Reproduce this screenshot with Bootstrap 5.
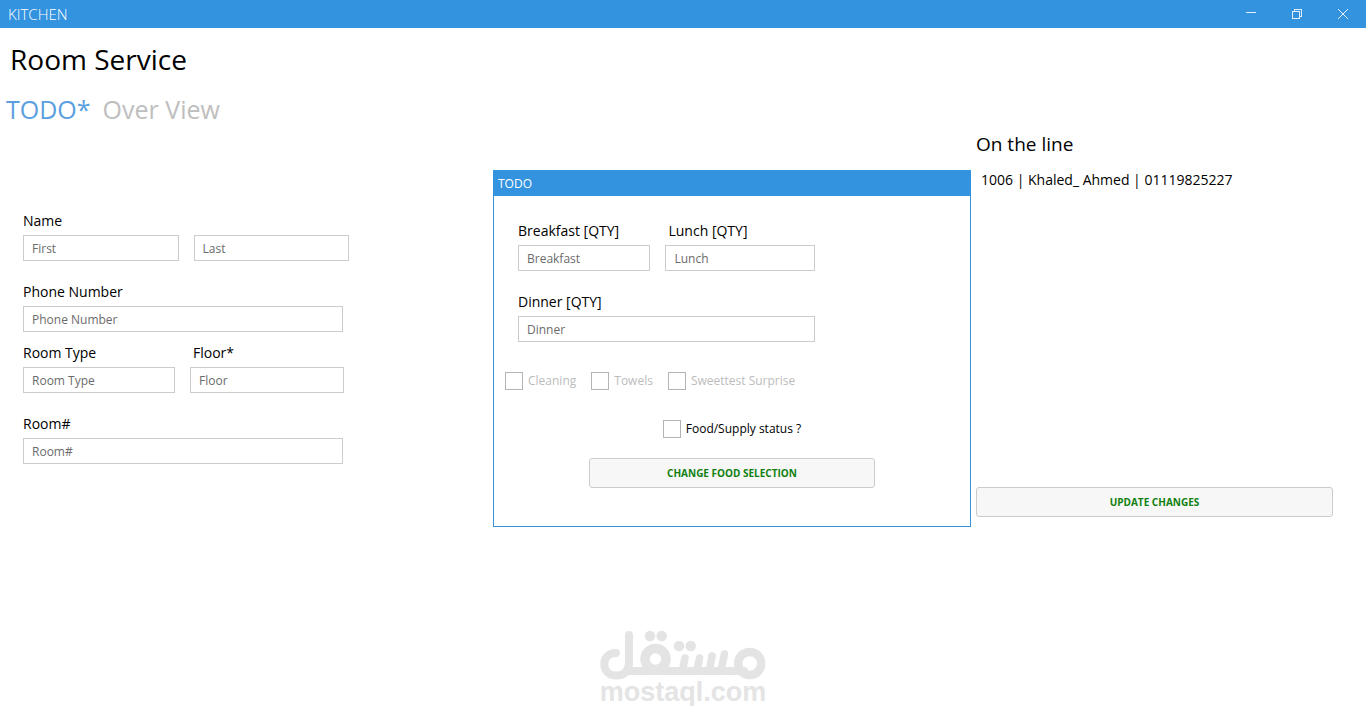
<!DOCTYPE html>
<html lang="en">
<head>
<meta charset="utf-8">
<meta name="viewport" content="width=device-width, initial-scale=1">
<title>Kitchen</title>
<link rel="stylesheet" href="https://cdn.jsdelivr.net/npm/bootstrap@5.3.0/dist/css/bootstrap.min.css">
<style>
  :root { --accent: #3393df; --line: #ccc; }
  body { font-family: "Open Sans", "Noto Sans", sans-serif; font-size: 14px; line-height: 20px; color: #000; background: #fff; }
  .titlebar { background: var(--accent); color: #fff; height: 28px; padding-left: 8px; }
  .titlebar-name { font-weight: 300; font-size: 15px; }
  .winbtn { width: 46px; height: 28px; color: #fff; border-radius: 0; }
  .winbtn svg { display: block; margin: auto; }
  .page-title { font-size: 28px; line-height: 40px; padding: 11px 10px 0; font-weight: 400; }
  .tabs { gap: 12px; padding: 10px 6px 0; }
  .tabs .nav-link { font-size: 25px; line-height: 40px; color: #bebebe; }
  .tabs .nav-link.active { color: #5b9fe0; }
  .panes { display: grid; grid-template-columns: 493fr 478fr 395fr; align-items: start; }
  .guest { padding: 82px 20px 0 23px; }
  .field-label { display: block; margin: 0 0 4px; line-height: 20px; }
  .textbox { height: 26px; padding: 0 8px; font-size: 12px; border: 1px solid var(--line); border-radius: 0; color: #000; }
  .textbox::placeholder { color: #6b6b6b; opacity: 1; }
  .name-row { max-width: 326px; gap: 15px; }
  .wide { max-width: 320px; }
  .pair { display: grid; gap: 15px; }
  .room-row { grid-template-columns: 152fr 154fr; max-width: 321px; margin: 11px 0 21px; }
  .name-block { margin-bottom: 21px; }
  .meal-row { grid-template-columns: 132fr 149fr; margin-bottom: 21px; }
  .indent { padding-left: 3px; }
  .todo { border: 1px solid var(--accent); border-radius: 0; margin-top: 41px; min-height: 357px; }
  .todo-head { background: var(--accent); color: #fff; font-size: 12px; line-height: 25px; padding: 0 4px; }
  .meals { max-width: 321px; padding: 25px 0 0 24px; }
  .tick { gap: 5px; font-size: 12px; line-height: 20px; margin: 0; align-items: center; }
  .tick .form-check-input { width: 18px; height: 18px; margin: 0; border: 1px solid #b4b4b4; border-radius: 0; opacity: 1; flex: none; }
  .tick.off { color: #bcbcbc; }
  .tick-row { gap: 15px; padding: 29px 11px 0; }
  .status-row { margin: 28px 0 19px; }
  .action { height: 30px; padding: 0; font-size: 10px; font-weight: 700; color: #108010; background: #f7f7f7; border: 1px solid var(--line); border-radius: 3px; }
  .change { width: 60%; }
  .queue { padding: 3px 33px 0 5px; min-height: 388px; }
  .queue-title { font-size: 19px; line-height: 24px; font-weight: 400; margin: 0 0 14px; }
  .queue-item { padding-left: 5px; line-height: 20px; }
  .brand { color: #e4e4e4; margin-top: 99px; }
  .brand-name { font: 700 27px/28px "Liberation Sans", Arial, sans-serif; }
</style>
</head>
<body>
<header class="titlebar d-flex align-items-center">
  <span class="titlebar-name">KITCHEN</span>
  <div class="d-flex ms-auto">
    <button type="button" class="btn winbtn p-0" aria-label="Minimize"><svg width="10" height="10" fill="none" stroke="#e3f0fb" shape-rendering="crispEdges"><path d="M0 3.500H10"/></svg></button>
    <button type="button" class="btn winbtn p-0" aria-label="Restore"><svg width="10" height="10" fill="none" stroke="#e3f0fb" shape-rendering="crispEdges"><path d="M.5 2.500h7v7h-7zM2.500 2.500v-2h7v7h-2"/></svg></button>
    <button type="button" class="btn winbtn p-0" aria-label="Close"><svg width="10" height="10" fill="none" stroke="#e3f0fb"><path d="M0 0l10 10M10 0L0 10"/></svg></button>
  </div>
</header>
<main>
  <h1 class="page-title m-0">Room Service</h1>
  <nav class="tabs nav">
    <a class="nav-link p-0 active" href="#todo">TODO*</a>
    <a class="nav-link p-0" href="#overview">Over View</a>
  </nav>
  <div class="panes">
    <form class="guest">
      <div class="name-block">
        <label class="field-label" for="first">Name</label>
        <div class="name-row d-flex">
          <input class="form-control textbox" id="first" type="text" placeholder="First">
          <input class="form-control textbox" id="last" type="text" placeholder="Last" aria-label="Last name">
        </div>
      </div>
      <div class="wide">
        <label class="field-label" for="phone">Phone Number</label>
        <input class="form-control textbox" id="phone" type="tel" placeholder="Phone Number">
      </div>
      <div class="pair room-row">
        <div>
          <label class="field-label" for="rtype">Room Type</label>
          <input class="form-control textbox" id="rtype" type="text" placeholder="Room Type">
        </div>
        <div>
          <label class="field-label indent" for="floor">Floor*</label>
          <input class="form-control textbox" id="floor" type="text" placeholder="Floor">
        </div>
      </div>
      <div class="wide">
        <label class="field-label" for="room">Room#</label>
        <input class="form-control textbox" id="room" type="text" placeholder="Room#">
      </div>
    </form>

    <section class="todo" id="todo">
      <div class="todo-head">TODO</div>
      <div class="meals">
        <div class="pair meal-row">
          <div>
            <label class="field-label" for="breakfast">Breakfast [QTY]</label>
            <input class="form-control textbox" id="breakfast" type="text" placeholder="Breakfast">
          </div>
          <div>
            <label class="field-label indent" for="lunch">Lunch [QTY]</label>
            <input class="form-control textbox" id="lunch" type="text" placeholder="Lunch">
          </div>
        </div>
        <label class="field-label" for="dinner">Dinner [QTY]</label>
        <input class="form-control textbox" id="dinner" type="text" placeholder="Dinner">
      </div>
      <div class="tick-row d-flex">
        <label class="tick off d-flex"><input class="form-check-input" type="checkbox" disabled>Cleaning</label>
        <label class="tick off d-flex"><input class="form-check-input" type="checkbox" disabled>Towels</label>
        <label class="tick off d-flex"><input class="form-check-input" type="checkbox" disabled>Sweettest Surprise</label>
      </div>
      <div class="status-row d-flex justify-content-center">
        <label class="tick d-flex"><input class="form-check-input" type="checkbox">Food/Supply status ?</label>
      </div>
      <button type="button" class="btn action change d-block mx-auto">CHANGE FOOD SELECTION</button>
    </section>

    <section class="queue d-flex flex-column">
      <h2 class="queue-title">On the line</h2>
      <ul class="list-unstyled m-0"><li class="queue-item">1006 | Khaled_ Ahmed | 01119825227</li></ul>
      <button type="button" class="btn action w-100 mt-auto">UPDATE CHANGES</button>
    </section>
  </div>
</main>
<footer class="brand d-flex flex-column align-items-center">
  <svg width="166" height="52" viewBox="10 6 166 52" overflow="visible" fill="none" stroke="currentColor" stroke-width="8" stroke-linecap="round" role="img" aria-label="Mostaql">
    <path d="M26 33C10 33 11 55 25 55.500C35 56 39 50 39 42V15M37 51H154"/>
    <circle cx="65.500" cy="39" r="10.500" stroke-width="9.500"/>
    <circle cx="159.700" cy="43.500" r="11.500" stroke-width="8.500"/>
    <path d="M95 38L92.500 50M109.500 38L107 50M122 36L119.500 50M134.500 34L131 50" stroke-width="7.500"/>
    <g fill="currentColor" stroke="none"><circle cx="60" cy="16" r="5.300"/><circle cx="71.700" cy="16" r="5.300"/><circle cx="89" cy="26" r="5.300"/><circle cx="100.700" cy="26" r="5.300"/></g>
  </svg>
  <span class="brand-name">mostaql.com</span>
</footer>
<script src="https://cdn.jsdelivr.net/npm/bootstrap@5.3.0/dist/js/bootstrap.bundle.min.js"></script>
</body>
</html>
